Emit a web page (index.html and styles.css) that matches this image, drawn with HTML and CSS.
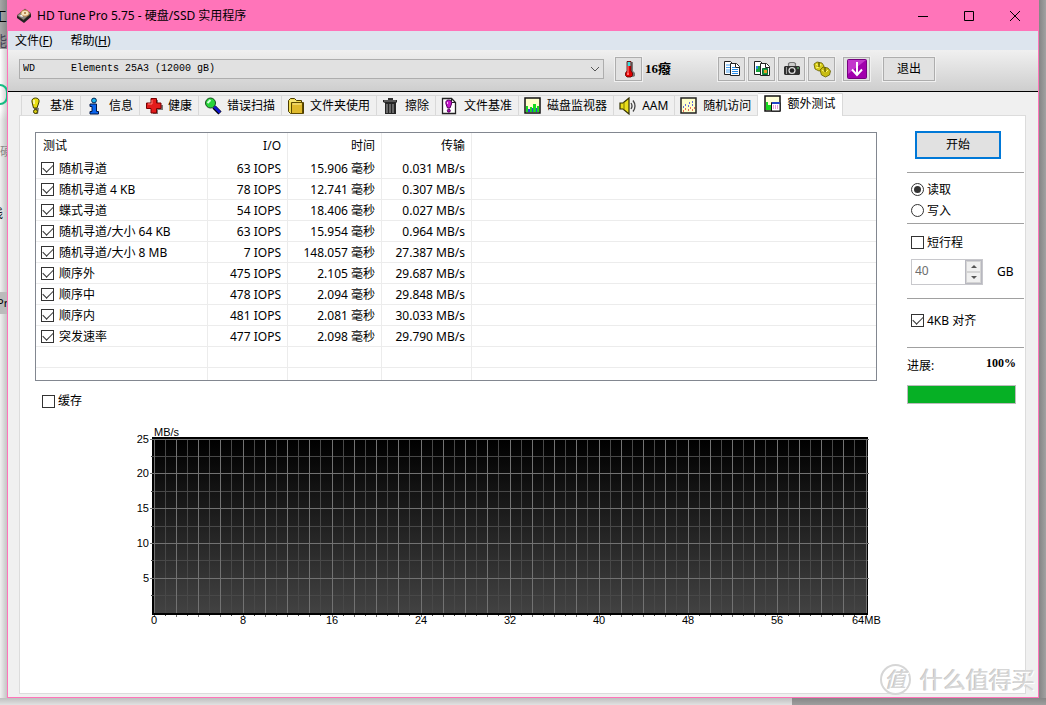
FILE: index.html
```html
<!DOCTYPE html>
<html lang="zh-CN">
<head>
<meta charset="utf-8">
<title>HD Tune Pro 5.75 - 硬盘/SSD 实用程序</title>
<link rel="stylesheet" href="styles.css">
</head>
<body>
<div class="desktop">
  <div class="behind-left" aria-hidden="true">
    <span class="frag frag-tool">工</span>
    <span class="frag frag-can">能</span>
    <span class="frag frag-ring"></span>
    <span class="frag frag-disk">硬</span>
    <span class="frag frag-me">线</span>
    <span class="frag frag-pr">Pr</span>
  </div>
  <div class="window">
    <header class="titlebar">
      <svg class="app-icon" viewBox="0 0 16 16"><path d="M1 8 9 2l6 4v3l-7 6-7-5z" fill="#222"/><path d="M1 7.500 9 1l6 4.500L7.500 12z" fill="#8d8782" stroke="#553b2b" stroke-width=".6"/><ellipse cx="9" cy="5.200" rx="4" ry="3" fill="#f7e4bf" stroke="#b9762e" stroke-width=".7"/><circle cx="9" cy="5" r="1" fill="#a86e39"/><path d="M3 8l3-1.500 1 2.500z" fill="#f4f4f4"/></svg>
      <h1 class="title">HD Tune Pro 5.75 - 硬盘/SSD 实用程序</h1>
      <button class="caption" aria-label="最小化"><svg viewBox="0 0 12 12"><path d="M1 6.500h10"/></svg></button>
      <button class="caption" aria-label="最大化"><svg viewBox="0 0 12 12"><path d="M1.500 1.500h9v9h-9z"/></svg></button>
      <button class="caption" aria-label="关闭"><svg viewBox="0 0 12 12"><path d="M1 1l10 10M11 1 1 11"/></svg></button>
    </header>
    <nav class="menubar">
      <button class="menu">文件(<u>F</u>)</button>
      <button class="menu">帮助(<u>H</u>)</button>
    </nav>
    <div class="toolbar">
      <div class="drive">
        <select class="drive-select" aria-label="驱动器"><option>WD&nbsp;&nbsp;&nbsp;&nbsp;&nbsp;&nbsp;Elements 25A3 (12000 gB)</option></select>
        <svg class="drive-arrow" viewBox="0 0 10 6"><path d="M1 1l4 4 4-4"/></svg>
      </div>
      <div class="temp">
        <button class="tool" aria-label="温度"><svg viewBox="0 0 18 18"><path d="M11 2h2v9l2 2v3l-2 1H8z" fill="#777"/><path d="M7 1.500h4v9.500l1.500 2v2.500l-1.500 1.500H7l-1.500-1.500V13L7 11z" fill="#e00000" stroke="#500" stroke-width=".8"/><path d="M7.500 2H10.500v4h-3z" fill="#3cdede"/><path d="M8 6v7" stroke="#ff8b8b"/><path d="M7 13h2v2H7z" fill="#ff7070"/></svg></button>
        <output class="temp-value">16癈</output>
      </div>
      <div class="tools">
        <button class="tool" aria-label="复制文本"><svg viewBox="0 0 18 18"><path d="M1.500 1.500h6l3 3v10h-9z" fill="#fff" stroke="#222"/><path d="M3 5h4M3 7.500h4M3 10h4M3 12h4" stroke="#48a0ee"/><path d="M7.500 3.500h6l3 3v9h-9z" fill="#fff" stroke="#222"/><path d="M12.500 3.500v4h4" fill="none" stroke="#222"/><path d="M9 7.500h3M9 9.500h6M9 11.500h6M9 13.500h6" stroke="#268ae5"/></svg></button>
        <button class="tool" aria-label="复制图像"><svg viewBox="0 0 18 18"><path d="M1.500 1.500h6l3 3v10h-9z" fill="#fff" stroke="#222"/><path d="M3 6h4v6H3z" fill="#18a43d"/><path d="M3 6h2v3H3z" fill="#2785df"/><path d="M7.500 3.500h6l3 3v9h-9z" fill="#fff" stroke="#222"/><path d="M12.500 3.500v4h4" fill="none" stroke="#222"/><path d="M9.500 8.500h5v6h-5z" fill="#1aa33b" stroke="#0b6a35"/><path d="M11 10h3v3h-3z" fill="#e79b25"/></svg></button>
        <button class="tool" aria-label="截图"><svg viewBox="0 0 18 18"><path d="M5.500 6V3.500l1.500-1h4l1.500 1V6" fill="#ccc" stroke="#777" stroke-width="1.200"/><path d="M2 6h14l1 1v7l-1 1H2l-1-1V7z" fill="#303030"/><path d="M3.500 7v7" stroke="#999"/><circle cx="9" cy="10.500" r="3.600" fill="#ddd"/><circle cx="9" cy="10.500" r="2.300" fill="#222"/><path d="M14 8h2" stroke="#62cf77"/></svg></button>
        <button class="tool" aria-label="选项"><svg viewBox="0 0 18 18"><g stroke="#625d00" stroke-width=".8"><path d="M1 4l3-2 5 1 2 3-1 4-4 1-4-2z" fill="#d8cd17"/><path d="M7 10l3-3 5 1 2.500 3-1 4-4 2-4-2z" fill="#c8bc11"/></g><path d="M3 4l3 2M8 4l-2 3M3 8l3-1M9 10l3 2M15 10l-2 2" stroke="#fff67c"/><path d="M6 2v5M12 7v5" stroke="#6b6500" stroke-width="1.500"/></svg></button>
        <button class="tool tool-apart" aria-label="保存"><svg class="big" viewBox="0 0 20 20"><rect x=".5" y=".5" width="19" height="19" rx="1" fill="#a100ad" stroke="#75007e"/><path d="M1 1h18L1 15z" fill="#c337cc"/><path d="M10 3v12M5 10.500l5 5.500 5-5.500" fill="none" stroke="#fff" stroke-width="2"/></svg></button>
        <button class="tool tool-exit">退出</button>
      </div>
    </div>
    <div class="workspace">
      <div class="tabs" role="tablist">
        <button class="tab" role="tab"><svg viewBox="0 0 18 18"><path d="M7 11h5l-1 6H8z" fill="#777"/><path d="M8.500 1C6 1 4.500 2.500 5 5l1.500 6h3.500L12 5c.5-2.500-1-4-3.500-4z" fill="#e9df13" stroke="#3c3900"/><path d="M7 3v4" stroke="#fffccb" stroke-width="1.500"/><circle cx="8.500" cy="14.500" r="2" fill="#d4ca10" stroke="#3c3900"/></svg>基准</button>
        <button class="tab" role="tab"><svg viewBox="0 0 18 18"><circle cx="8" cy="3.500" r="2.400" fill="#19b5f0" stroke="#002555"/><path d="M4 7h6.500v7.500h2V17H4v-2.500h2V9.500H4z" fill="#0a64ee" stroke="#001647"/></svg>信息</button>
        <button class="tab" role="tab"><svg viewBox="0 0 18 18"><path d="M7 3h6v5h5v5h-5v4H8z" fill="#777"/><path d="M6 1.500h5.500V6H16v5.500h-4.500V16H6v-4.500H1.500V6H6z" fill="#e21c1c" stroke="#700"/><path d="M7 3v4H3" fill="none" stroke="#ff8178"/></svg>健康</button>
        <button class="tab" role="tab"><svg viewBox="0 0 18 18"><path d="M10 10l6 6" stroke="#000" stroke-width="4.500"/><path d="M10 9.500l6 6" stroke="#1117cf" stroke-width="2.600"/><circle cx="6.500" cy="6" r="5" fill="#28d43b" stroke="#174b1c"/><path d="M3.500 6l3-3" stroke="#d9ffe0" stroke-width="2"/></svg>错误扫描</button>
        <button class="tab" role="tab"><svg viewBox="0 0 18 18"><path d="M1.500 14.500v-11l2-2h4l2 2h5v2h2v11h-13z" fill="#f0dc50" stroke="#4c3c00"/><path d="M4.500 5.500h11v11h-11z" fill="#dfb92c" stroke="#5e4b00"/><path d="M3 4h6M5.500 7h9" stroke="#fff19a"/></svg>文件夹使用</button>
        <button class="tab" role="tab"><svg viewBox="0 0 18 18"><path d="M1 3h14v2l-1 1v11H3V6L1 5z" fill="#252525"/><path d="M6 1h5v2H6z" fill="#333"/><path d="M2 4h12" stroke="#888"/><path d="M5 7v9M8 7v9M11 7v9" stroke="#aaa"/></svg>擦除</button>
        <button class="tab" role="tab"><svg viewBox="0 0 18 18"><path d="M1.500 1.500h9l4 4v11h-13z" fill="#fff" stroke="#222" stroke-width="1.300"/><path d="M10.500 1.500v4h4" fill="none" stroke="#222"/><path d="M7.500 3C5 3 4.500 5 5 7l1.500 4h2.500L10.500 7c.5-2.500-.5-4-3-4z" fill="#c514cc" stroke="#53005a"/><circle cx="7.800" cy="13.700" r="1.500" fill="#aa0cb1" stroke="#53005a"/><path d="M6.500 5v2" stroke="#ffb9ff"/></svg>文件基准</button>
        <button class="tab" role="tab"><svg viewBox="0 0 18 18"><path d="M1 1h15v15H1z" fill="#ffffcb" stroke="#111" stroke-width="1.500"/><path d="M2 15V9h2v6zM6 15v-5h2v5zM9 15V7h3v8zM13 15V9h2v6z" fill="#18d820"/><path d="M4 15v-3h2v3zM8 15v-4h1v4zM12 15v-4h1v4z" fill="#2940dd"/></svg>磁盘监视器</button>
        <button class="tab" role="tab"><svg viewBox="0 0 18 18"><path d="M1 6h3l6-5v16l-6-5H1z" fill="#e8dd1c" stroke="#333000" stroke-width="1.200"/><path d="M5 5v8" stroke="#817a00"/><path d="M12 6q2 3 0 6M14 3.500q4 5.500 0 11" fill="none" stroke="#444" stroke-width="1.300"/></svg>AAM</button>
        <button class="tab" role="tab"><svg viewBox="0 0 18 18"><path d="M1 1h15v15H1z" fill="#ffffcb" stroke="#222" stroke-width="1.500"/><path d="M3 10h1M5 8h1M8 9h1M9 6h1M12 5h1M12 8h1" stroke="#303de0" stroke-width="1.300"/><path d="M3 14h1M5 12h1M8 13h1M10 11h1M12 13h1M14 11h1" stroke="#e03a30" stroke-width="1.300"/></svg>随机访问</button>
        <button class="tab tab-selected" role="tab" aria-selected="true"><svg viewBox="0 0 18 18"><path d="M1 1h15v15H1z" fill="#ffffd8" stroke="#111" stroke-width="1.500"/><path d="M2 15V7h2v3h3v5z" fill="#18d820"/><path d="M7.500 7.500H16V16H7.500z" fill="#fff" stroke="#111"/><path d="M8 7h8v2H8z" fill="#2144c5"/><path d="M9 11h1m1 0h1m1 0h1M9 13h1m1 0h1m1 0h1" stroke="#d333ad"/></svg>额外测试</button>
      </div>
      <div class="sheet">
        <main class="main">
          <div class="listview">
            <table class="results">
              <colgroup><col class="c-test"><col class="c-io"><col class="c-time"><col class="c-rate"><col></colgroup>
              <thead><tr><th>测试</th><th>I/O</th><th>时间</th><th>传输</th><th></th></tr></thead>
              <tbody>
                <tr><td><label><input type="checkbox" checked>随机寻道</label></td><td>63 IOPS</td><td>15.906 毫秒</td><td>0.031 MB/s</td><td></td></tr>
                <tr><td><label><input type="checkbox" checked>随机寻道 4 KB</label></td><td>78 IOPS</td><td>12.741 毫秒</td><td>0.307 MB/s</td><td></td></tr>
                <tr><td><label><input type="checkbox" checked>蝶式寻道</label></td><td>54 IOPS</td><td>18.406 毫秒</td><td>0.027 MB/s</td><td></td></tr>
                <tr><td><label><input type="checkbox" checked>随机寻道/大小 64 KB</label></td><td>63 IOPS</td><td>15.954 毫秒</td><td>0.964 MB/s</td><td></td></tr>
                <tr><td><label><input type="checkbox" checked>随机寻道/大小 8 MB</label></td><td>7 IOPS</td><td>148.057 毫秒</td><td>27.387 MB/s</td><td></td></tr>
                <tr><td><label><input type="checkbox" checked>顺序外</label></td><td>475 IOPS</td><td>2.105 毫秒</td><td>29.687 MB/s</td><td></td></tr>
                <tr><td><label><input type="checkbox" checked>顺序中</label></td><td>478 IOPS</td><td>2.094 毫秒</td><td>29.848 MB/s</td><td></td></tr>
                <tr><td><label><input type="checkbox" checked>顺序内</label></td><td>481 IOPS</td><td>2.081 毫秒</td><td>30.033 MB/s</td><td></td></tr>
                <tr><td><label><input type="checkbox" checked>突发速率</label></td><td>477 IOPS</td><td>2.098 毫秒</td><td>29.790 MB/s</td><td></td></tr>
                <tr><td></td><td></td><td></td><td></td><td></td></tr>
                <tr class="stub"><td></td><td></td><td></td><td></td><td></td></tr>
              </tbody>
            </table>
          </div>
          <label class="cache"><input type="checkbox">缓存</label>
          <svg class="chart" id="chart" viewBox="0 0 747 206" role="img" aria-label="MB/s">
            <defs><linearGradient id="plot" x1="0" y1="0" x2="0" y2="1"><stop offset="0" stop-color="#000"/><stop offset="1" stop-color="#424242"/></linearGradient></defs>
            <rect x="22" y="13" width="716" height="178" fill="#000"/>
            <rect x="24" y="15" width="713" height="174" fill="url(#plot)"/>
          </svg>
        </main>
        <aside class="side">
          <button class="start">开始</button>
          <div class="group mode">
            <label><input type="radio" name="mode" checked>读取</label>
            <label><input type="radio" name="mode">写入</label>
          </div>
          <div class="group stroke">
            <label><input type="checkbox">短行程</label>
            <div class="size">
              <span class="spin">
                <input class="spin-text" type="text" value="40" aria-label="短行程大小" disabled>
                <span class="spin-keys">
                  <button aria-label="增加" disabled><svg viewBox="0 0 6 3"><path d="M0 3l3-3 3 3z"/></svg></button>
                  <button aria-label="减少" disabled><svg viewBox="0 0 6 3"><path d="M0 0l3 3 3-3z"/></svg></button>
                </span>
              </span>
              <span>GB</span>
            </div>
          </div>
          <div class="group align"><label><input type="checkbox" checked>4KB 对齐</label></div>
          <div class="group progress">
            <div class="progress-head"><span>进展:</span><b>100%</b></div>
            <div class="bar" role="progressbar" aria-valuenow="100"><div class="bar-fill" style="width:100%"></div></div>
          </div>
        </aside>
      </div>
    </div>
  </div>
  <div class="behind-right"></div>
  <div class="behind-bottom"></div>
  <div class="watermark"><span class="seal">值</span><span>什么值得买</span></div>
</div>
<script src="chart.js"></script>
</body>
</html>
```
FILE: styles.css
```css
* { box-sizing: border-box; }

body {
  margin: 0;
  font: 12px/16px "Noto Sans", "Noto Sans CJK SC", sans-serif;
  color: #000;
}

button, input, select { font: inherit; color: inherit; margin: 0; padding: 0; }
button { background: none; border: 0; }
h1 { margin: 0; font-weight: 400; }

.desktop {
  position: relative;
  display: grid;
  grid-template: 1fr 7px / 7px 1fr 7px;
  min-height: 100vh;
  overflow: hidden;
}

/* Windows peeking out behind the main one */
.behind-left {
  position: relative;
  overflow: hidden;
  background:
    linear-gradient(90deg, transparent, rgba(0, 0, 0, .18)),
    linear-gradient(#a6a6a6 49px, #fff 49px, #fff 110px, #f0f0f0 120px);
}
.frag { position: absolute; left: -7px; line-height: 16px; }
.frag-tool { top: 8px; font-size: 14px; }
.frag-can { top: 33px; color: #445; font-size: 14px; }
.frag-ring { top: 84px; left: -16px; width: 24px; height: 21px; border: 2px solid #16bb83; border-radius: 8px; }
.frag-disk { top: 144px; left: 0; color: #888; }
.frag-me { top: 206px; left: -9px; }
.frag-pr { top: 292px; left: 0; width: 7px; height: 22px; line-height: 22px; font-size: 11px; background: #bbb; text-indent: -3px; }
.behind-right { background: linear-gradient(90deg, #858585, #a2a2a2); }
.behind-bottom {
  grid-column: 1 / -1;
  background:
    linear-gradient(rgba(0, 0, 0, .2), rgba(0, 0, 0, .06)),
    linear-gradient(90deg, #efefef 792px, #a8a8a8 792px);
}

.window {
  display: flex;
  flex-direction: column;
  background: #f0f0f0;
  border: 1px solid #ff74b9;
  border-top: 0;
}

.titlebar { display: flex; align-items: center; height: 31px; padding-left: 8px; background: #ff74b9; }
.app-icon { width: 16px; height: 16px; }
.title { flex: 1; padding-left: 5px; font-size: 12px; }
.caption { width: 46px; height: 31px; }
.caption svg { display: block; width: 12px; height: 12px; margin: auto; fill: none; stroke: #000; }

.menubar { display: flex; gap: 18px; height: 19px; padding-left: 7px; background: #dde5ee; }
.menu { line-height: 20px; }

.toolbar {
  display: flex;
  align-items: center;
  height: 42px;
  padding: 0 103px 4px 11px;
  background: linear-gradient(#f0f0f0, #cecece);
  border-bottom: 1px solid #000;
}
.drive { position: relative; flex: 1; }
.drive-select {
  appearance: none;
  display: block;
  width: 100%;
  height: 20px;
  padding: 1px 0 0 3px;
  border: 1px solid #adadad;
  border-radius: 0;
  background: #e1e1e1;
  font: 10px/16px "Liberation Mono", monospace;
}
.drive-arrow { position: absolute; right: 4px; top: 7px; width: 10px; height: 6px; fill: none; stroke: #555; pointer-events: none; }
.temp { display: flex; align-items: center; gap: 3px; width: 103px; margin-left: 11px; }
.temp-value { font: bold 13px/16px "Liberation Serif", "Noto Sans CJK SC", serif; }
.tools { display: flex; gap: 3px; }
.tool {
  width: 27px;
  height: 24px;
  background: #e1e1e1;
  border: 1px solid #adadad;
  box-shadow: 0 0 0 1px #f0f0f0;
}
.tool svg { display: block; width: 18px; height: 18px; margin: auto; }
.tool .big { width: 20px; height: 20px; }
.tool-apart { margin-left: 5px; }
.tool-exit { width: 52px; margin-left: 10px; }

.workspace { flex: 1; display: flex; flex-direction: column; padding: 1px 12px 3px 11px; }
.tabs { display: flex; align-items: flex-end; height: 22px; padding-left: 2px; }
.tab {
  display: flex;
  align-items: center;
  gap: 5px;
  height: 20px;
  padding: 0 6px 0 5px;
  border: solid #d9d9d9;
  border-width: 1px 1px 0 0;
  white-space: nowrap;
}
.tab:first-child { border-left-width: 1px; }
.tab svg { width: 18px; height: 18px; }
.tab-selected { position: relative; height: 23px; margin-bottom: -1px; padding: 0 7px 2px 6px; background: #fff; }

.sheet {
  flex: 1;
  display: flex;
  gap: 30px;
  padding: 16px 1px 16px 15px;
  background: #fff;
  border: 1px solid #dcdcdc;
}
.main { flex: 1; min-width: 0; }

.listview { border: 1px solid #828790; }
.results { width: 100%; table-layout: fixed; border-collapse: separate; border-spacing: 0; }
.c-test { width: 172px; }
.c-io { width: 80px; }
.c-time { width: 94px; }
.c-rate { width: 90px; }
.results th, .results td { padding: 0 6px 0 5px; text-align: right; white-space: nowrap; border-right: 1px solid #ececec; }
.results th { height: 25px; font-weight: 400; }
.results td { height: 21px; padding-top: 1px; border-bottom: 1px solid #ececec; }
.results th:first-child, .results td:first-child { text-align: left; }
.results th:first-child { padding-left: 7px; }
.results th:last-child, .results td:last-child { border-right: 0; }
.results .stub td { height: 12px; border-bottom: 0; }

label { display: flex; align-items: center; gap: 5px; }

input[type="checkbox"], input[type="radio"] {
  appearance: none;
  flex: none;
  display: grid;
  place-items: center;
  width: 13px;
  height: 13px;
  border: 1px solid #333;
  background: #fff;
}
input[type="radio"] { border-radius: 50%; }
input[type="checkbox"]:checked::before {
  content: "";
  width: 9px;
  height: 5px;
  margin-bottom: 4px;
  border: solid #333;
  border-width: 0 0 1px 1px;
  transform: rotate(-45deg);
}
input[type="radio"]:checked::before { content: ""; width: 7px; height: 7px; border-radius: 50%; background: #333; }

.cache { margin: 12px 0 0 7px; gap: 3px; width: max-content; }
.chart { display: block; width: 747px; max-width: calc(100% - 95px); margin: 15px 0 0 95px; overflow: visible; font: 11px "Liberation Sans", sans-serif; }

.side { flex: none; width: 117px; }
.side label { gap: 3px; height: 21px; }
.start { display: block; width: 86px; height: 28px; margin: -1px 0 13px 8px; background: #e1e1e1; border: 2px solid #0078d7; }
.group { border-top: 1px solid #a0a0a0; padding-left: 4px; }
.mode { height: 51px; padding-top: 6px; }
.stroke { height: 75px; padding-top: 8px; }
.size { display: flex; align-items: center; gap: 14px; margin-top: 6px; }
.spin { display: flex; width: 72px; height: 26px; border: 1px solid #c8c8cc; }
.spin-text { flex: 1; min-width: 0; padding: 0 0 2px 3px; border: 0; background: #fff; color: #6d6d6d; }
.spin-keys { display: flex; flex-direction: column; width: 17px; border: 1px solid #b8b8c0; }
.spin-keys button { flex: 1; background: #f0f0f0; border: 1px solid #d4d4d4; }
.spin-keys svg { display: block; width: 6px; height: 3px; margin: auto; fill: #555; }
.align { height: 49px; padding-top: 11px; }
.progress { padding: 7px 8px 0 0; }
.progress-head { display: flex; justify-content: space-between; height: 30px; padding-top: 3px; }
.progress-head b { font: bold 12px/16px "Liberation Serif", serif; margin-top: -3px; }
.bar { height: 19px; border: 1px solid #bcbcbc; background: #e6e6e6; }
.bar-fill { height: 100%; background: #06b025; }

.watermark {
  position: absolute;
  right: 11px;
  bottom: 10px;
  display: flex;
  align-items: center;
  gap: 9px;
  color: #d6d6d6;
  font-size: 23px;
  line-height: 32px;
  text-shadow: 1px 1px 0 #fff, -1px 0 0 #c4c4c4;
}
.seal {
  width: 31px;
  height: 31px;
  border: 2px solid #d6d6d6;
  border-radius: 50%;
  font-size: 21px;
  font-style: italic;
  line-height: 26px;
  text-align: center;
}
```
FILE: chart.js
```js
const chart = document.getElementById("chart");
const NS = "http://www.w3.org/2000/svg";
const LEFT = 24, TOP = 15, COL = 712 / 64, ROW = 174 / 10;

function add(name, attrs, text) {
  const el = document.createElementNS(NS, name);
  for (const key in attrs) el.setAttribute(key, attrs[key]);
  if (text) el.textContent = text;
  chart.appendChild(el);
}

function rule(x, y, width, height, major) {
  add("rect", { x, y, width, height, fill: major ? "#727272" : "#484848" });
}

for (const major of [false, true]) {
  for (let i = 0; i < 10; i++) {
    if ((i % 2 === 0) === major) rule(major ? 20 : 21, TOP + Math.floor(i * ROW), major ? 719 : 717, 1, major);
  }
  for (let i = 0; i <= 64; i++) {
    if ((i % 2 === 0) === major) rule(LEFT + Math.floor(i * COL), TOP, 1, major ? 178 : 177, major);
  }
}
add("rect", { x: 22, y: 189, width: 716, height: 2, fill: "#000" });

for (let v = 25; v >= 5; v -= 5) {
  add("text", { x: 19, y: TOP + Math.floor((25 - v) / 5 * ROW * 2) + 4, "text-anchor": "end" }, String(v));
}
for (let v = 0; v <= 64; v += 8) {
  const last = v === 64;
  add("text", { x: last ? 722 : LEFT + v * COL, y: 200, "text-anchor": last ? "start" : "middle" }, last ? "64MB" : String(v));
}
add("text", { x: 24, y: 12 }, "MB/s");
```
